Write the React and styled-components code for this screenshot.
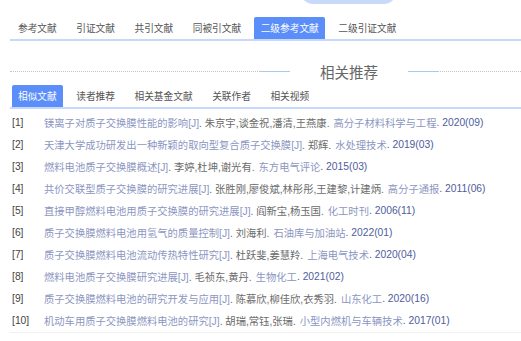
import React from "react";
import styled, { createGlobalStyle } from "styled-components";

const Global = createGlobalStyle`
  html, body { margin: 0; padding: 0; background: #fff; overflow: hidden; }
  body { font-family: "Liberation Sans", "Noto Sans CJK SC", sans-serif; }
`;

const Page = styled.div`
  padding-left: 10px;
`;

const PillStrip = styled.div`
  height: 4px;
  overflow: hidden;
  display: flex;
  align-items: flex-end;
  padding-left: 292px;
`;

const Pill = styled.div`
  width: 93px;
  height: 20px;
  flex-shrink: 0;
  border-radius: 10px;
  background: #c9d9f9;
`;

const TabBar = styled.div`
  display: flex;
  gap: 6.5px;
  padding-left: 1.5px;
  border-bottom: 2px solid #c8d8fa;
  margin-top: ${(p) => p.$top}px;
`;

const Tab = styled.div`
  height: 22px;
  line-height: 22px;
  padding: 0 6.5px;
  font-family: "Noto Sans CJK SC", sans-serif;
  font-size: 9.7px;
  color: ${(p) => (p.$active ? "#fff" : "#555")};
  background: ${(p) => (p.$active ? "#5b8ef8" : "transparent")};
  border-radius: 2px 2px 0 0;
  white-space: nowrap;
`;

const HeadingRow = styled.div`
  display: flex;
  align-items: center;
  height: 20px;
  margin-top: 20px;
`;

const Dotted = styled.div`
  flex: ${(p) => (p.$fixed ? `0 0 ${p.$fixed}px` : "1")};
  border-top: 1px dotted #c4c4c4;
`;

const BlueSeg = styled.div`
  width: 30px;
  border-top: 1px solid #a9c9ef;
`;

const HeadingText = styled.div`
  padding: 0 30px;
  font-family: "Noto Sans CJK SC", sans-serif;
  font-size: 14.5px;
  color: #666;
  white-space: nowrap;
`;

const List = styled.div`
  padding-top: 2px;
  padding-bottom: 1px;
  border-bottom: 1px solid #f1f1f1;
`;

const Row = styled.div`
  display: flex;
  align-items: center;
  height: 22px;
  font-size: 10.3px;
  white-space: nowrap;
  overflow: hidden;
  font-family: "Liberation Sans", "Noto Sans CJK SC", sans-serif;
`;

const Num = styled.span`
  width: 32px;
  padding-left: 2px;
  color: #444;
  flex-shrink: 0;
`;

const Title = styled.span`
  color: #8c96bf;
`;

const Authors = styled.span`
  color: #6b6b6b;
`;

const Journal = styled.span`
  color: #8c96bf;
  margin-left: 4px;
`;

const Year = styled.span`
  color: #4f5d9c;
`;

const items = [
  ["镁离子对质子交换膜性能的影响", "朱京宇,谈金祝,潘清,王燕康", "高分子材料科学与工程", "2020(09)"],
  ["天津大学成功研发出一种新颖的取向型复合质子交换膜", "郑辉", "水处理技术", "2019(03)"],
  ["燃料电池质子交换膜概述", "李婷,杜坤,谢光有", "东方电气评论", "2015(03)"],
  ["共价交联型质子交换膜的研究进展", "张胜刚,廖俊斌,林彤彤,王建黎,计建炳", "高分子通报", "2011(06)"],
  ["直接甲醇燃料电池用质子交换膜的研究进展", "阎新宝,杨玉国", "化工时刊", "2006(11)"],
  ["质子交换膜燃料电池用氢气的质量控制", "刘海利", "石油库与加油站", "2022(01)"],
  ["质子交换膜燃料电池流动传热特性研究", "杜跃斐,姜慧羚", "上海电气技术", "2020(04)"],
  ["燃料电池质子交换膜研究进展", "毛祯东,黄丹", "生物化工", "2021(02)"],
  ["质子交换膜燃料电池的研究开发与应用", "陈慕欣,柳佳欣,衣秀羽", "山东化工", "2020(16)"],
  ["机动车用质子交换膜燃料电池的研究", "胡瑞,常钰,张瑞", "小型内燃机与车辆技术", "2017(01)"],
];

const topTabs = ["参考文献", "引证文献", "共引文献", "同被引文献", "二级参考文献", "二级引证文献"];
const subTabs = ["相似文献", "读者推荐", "相关基金文献", "关联作者", "相关视频"];

export default function App() {
  return (
    <>
      <Global />
      <Page>
        <PillStrip>
          <Pill />
        </PillStrip>
        <TabBar $top={13}>
          {topTabs.map((t, i) => (
            <Tab key={t} $active={i === 4}>{t}</Tab>
          ))}
        </TabBar>
        <HeadingRow>
          <Dotted $fixed={250} />
          <BlueSeg />
          <HeadingText>相关推荐</HeadingText>
          <BlueSeg />
          <Dotted />
        </HeadingRow>
        <TabBar $top={4}>
          {subTabs.map((t, i) => (
            <Tab key={t} $active={i === 0}>{t}</Tab>
          ))}
        </TabBar>
        <List>
          {items.map((it, i) => (
            <Row key={i}>
              <Num>[{i + 1}]</Num>
              <Title>{it[0]}[J]</Title>
              <Authors>. {it[1]}.</Authors>
              <Journal>{it[2]}</Journal>
              <Year>. {it[3]}</Year>
            </Row>
          ))}
        </List>
      </Page>
    </>
  );
}
